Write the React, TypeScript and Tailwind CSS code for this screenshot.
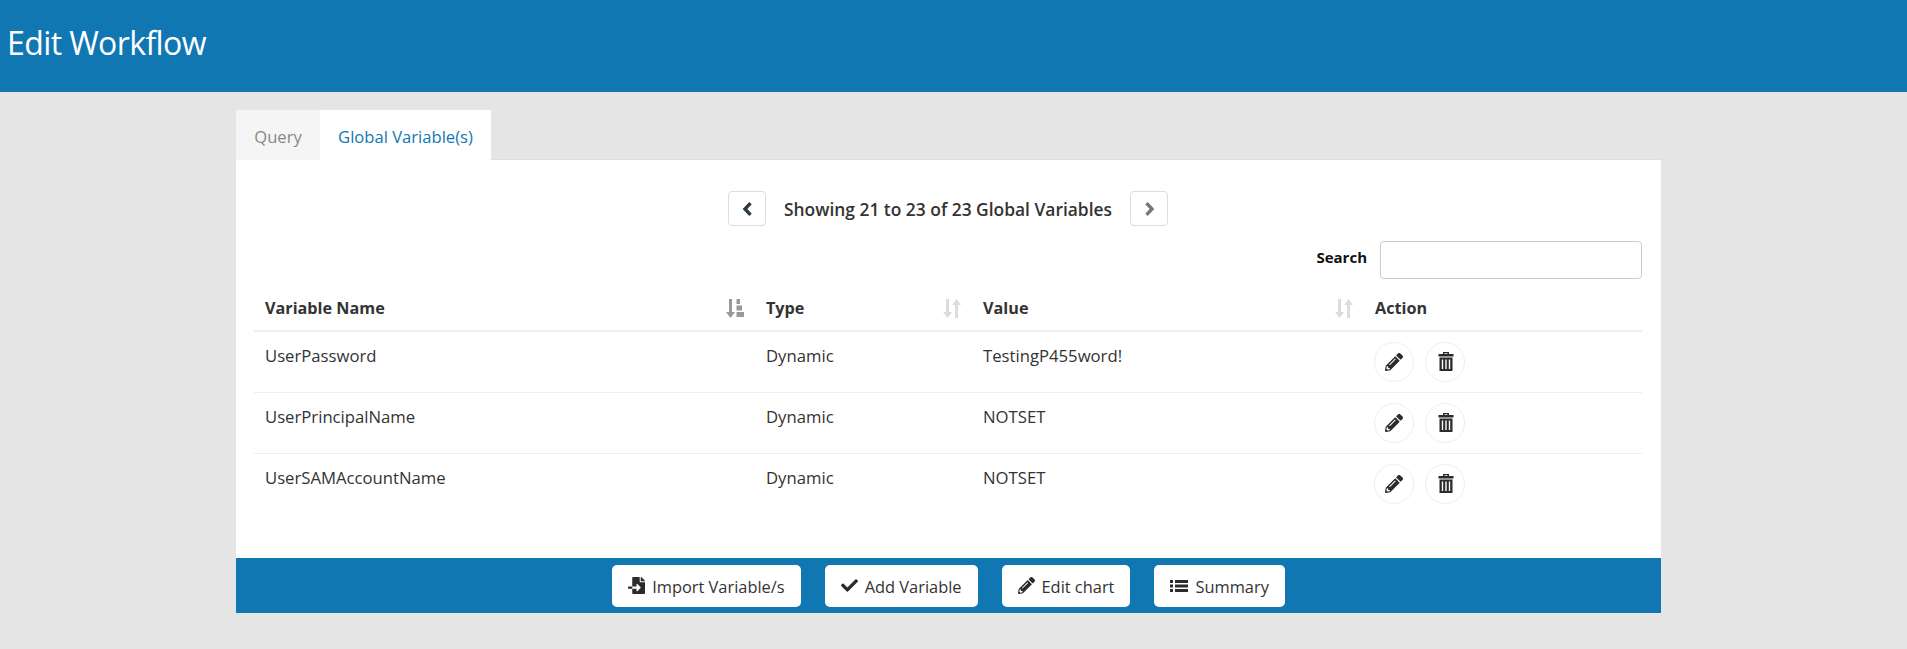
import { FaCheck, FaFileImport, FaPencilAlt } from "react-icons/fa";

const ROWS = [
  { name: "UserPassword", type: "Dynamic", value: "TestingP455word!" },
  { name: "UserPrincipalName", type: "Dynamic", value: "NOTSET" },
  { name: "UserSAMAccountName", type: "Dynamic", value: "NOTSET" },
];

function TrashIcon() {
  return (
    <svg width="16" height="19" viewBox="0 0 16 19" fill="currentColor" className="ml-[1px]">
      <path d="M5 0h6v2h4.500v2.500h-15V2H5zM6.500 1.200V2h3v-.8z" fillRule="evenodd" />
      <path d="M1.500 5.500h13V19h-13zM3.800 7.500v9.500h1.400V7.500zM7.300 7.500v9.500h1.400V7.500zM10.800 7.500v9.500h1.400V7.500z" fillRule="evenodd" />
    </svg>
  );
}

function ListIcon() {
  return (
    <svg width="18" height="12" viewBox="0 0 18 12" fill="#2b2b2b">
      <path d="M0 0h3v3H0zM5 0h13v3H5zM0 4.500h3v3H0zM5 4.500h13v3H5zM0 9h3v3H0zM5 9h13v3H5z" />
    </svg>
  );
}

function Chevron({ dir }: { dir: "left" | "right" }) {
  return (
    <svg width="11" height="14" viewBox="0 0 11 14" fill="none" stroke="currentColor" strokeWidth="3.4">
      <polyline points={dir === "left" ? "8.500,1.200 3,7 8.500,12.800" : "2.500,1.200 8,7 2.500,12.800"} />
    </svg>
  );
}

// up and down arrows, the resting sort state of a column
function SortIcon() {
  return (
    <svg width="18" height="19" viewBox="0 0 18 19" fill="#dcdcdc">
      <path d="M3 0h3v13h3l-4.500 6L0 13h3z" />
      <path d="M12 19h3V6h3l-4.500-6L9 6h3z" />
    </svg>
  );
}

function SortedIcon() {
  return (
    <svg width="18" height="19" viewBox="0 0 18 19" fill="#999999">
      <path d="M3 0h3v13h3l-4.500 6L0 13h3z" />
      <path d="M10.500 0h3.500v5h-3.500zM10.500 6.500h5.500v5h-5.500zM10.500 13h7.500v5h-7.500z" />
    </svg>
  );
}

function RoundButton({ children }: { children: React.ReactNode }) {
  return (
    <button className="flex h-10 w-10 items-center justify-center rounded-full border border-[#eeeeee] bg-white text-[#2b2b2b]">
      {children}
    </button>
  );
}

function FooterButton({ icon, label }: { icon: React.ReactNode; label: string }) {
  return (
    <button className="flex h-[42px] items-center gap-[7px] rounded-[5px] bg-white px-[16px] text-[16.400px] text-[#333333]">
      {icon}
      <span className="pt-[4px]">{label}</span>
    </button>
  );
}

export default function App() {
  return (
    <div className="min-h-screen bg-[#e5e5e5] font-['Open_Sans','Noto_Sans',sans-serif] text-[#333333]">
      <header className="flex h-[92px] items-center bg-[#1177b3] pl-[7px] pb-[6px] text-[32px] tracking-[-0.6px] text-white">
        Edit Workflow
      </header>

      <main className="ml-[236px] w-[1425px] pt-[18px]">
        <div className="flex h-[50px] text-[16.600px] leading-[53px]">
          <div className="w-[84px] bg-[#f5f5f5] text-center text-[#888888]">Query</div>
          <div className="w-[171px] bg-white text-center text-[#1177b3]">Global Variable(s)</div>
          <div className="flex-1 border-b border-[#dddddd]" />
        </div>

        <section className="h-[398px] bg-white pl-[18px] pr-[19px] pt-[31px]">
          <div className="flex h-[35px] items-center justify-center gap-[18px]">
            <button className="flex h-[35px] w-[38px] items-center justify-center rounded-[4px] border border-[#dddddd] text-[#2b3a42]">
              <Chevron dir="left" />
            </button>
            <span className="pt-[2px] text-[17.400px] font-semibold">Showing 21 to 23 of 23 Global Variables</span>
            <button className="flex h-[35px] w-[38px] items-center justify-center rounded-[4px] border border-[#dddddd] text-[#777777]">
              <Chevron dir="right" />
            </button>
          </div>

          <div className="mt-[15px] flex h-[38px] items-center justify-end gap-[13px]">
            <label className="pb-[5px] text-[15px] font-bold text-[#111111]">Search</label>
            <input className="h-[38px] w-[262px] rounded-[4px] border border-[#cccccc] bg-white" />
          </div>

          <table className="w-full table-fixed border-collapse text-[16.700px]">
            <colgroup>
              <col className="w-[501px]" />
              <col className="w-[217px]" />
              <col className="w-[392px]" />
              <col />
            </colgroup>
            <thead>
              <tr className="h-[52px] border-b-2 border-[#eeeeee] text-[16.200px] font-bold">
                <th className="px-[11px] pt-[8px] text-left">
                  <div className="flex items-center justify-between">
                    Variable Name
                    <SortedIcon />
                  </div>
                </th>
                <th className="px-[11px] pt-[8px] text-left">
                  <div className="flex items-center justify-between">
                    Type
                    <SortIcon />
                  </div>
                </th>
                <th className="px-[11px] pt-[8px] text-left">
                  <div className="flex items-center justify-between">
                    Value
                    <SortIcon />
                  </div>
                </th>
                <th className="px-[11px] pt-[8px] text-left">Action</th>
              </tr>
            </thead>
            <tbody>
              {ROWS.map((row, i) => (
                <tr key={row.name} className={i < ROWS.length - 1 ? "border-b border-[#eeeeee]" : ""}>
                  <td className="h-[61px] px-[11px] pb-[12px] align-middle">{row.name}</td>
                  <td className="px-[11px] pb-[12px] align-middle">{row.type}</td>
                  <td className="px-[11px] pb-[12px] align-middle">{row.value}</td>
                  <td className="px-[10px] align-middle">
                    <div className="flex gap-[11px]">
                      <RoundButton>
                        <FaPencilAlt size={18} />
                      </RoundButton>
                      <RoundButton>
                        <TrashIcon />
                      </RoundButton>
                    </div>
                  </td>
                </tr>
              ))}
            </tbody>
          </table>
        </section>

        <footer className="flex h-[55px] items-center justify-center gap-[24px] bg-[#1177b3]">
          <FooterButton icon={<FaFileImport size={17} className="text-[#2b2b2b]" />} label="Import Variable/s" />
          <FooterButton icon={<FaCheck size={17} className="text-[#2b2b2b]" />} label="Add Variable" />
          <FooterButton icon={<FaPencilAlt size={17} className="text-[#2b2b2b]" />} label="Edit chart" />
          <FooterButton icon={<ListIcon />} label="Summary" />
        </footer>
      </main>
    </div>
  );
}
